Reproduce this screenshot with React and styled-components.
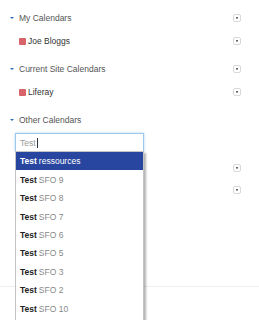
import React from "react";
import styled, { createGlobalStyle } from "styled-components";

const GlobalStyle = createGlobalStyle`
  html, body {
    margin: 0;
    padding: 0;
    background: #fff;
  }
  body {
    font-family: "Liberation Sans", Arial, sans-serif;
    font-size: 8.5px;
    width: 259px;
    height: 320px;
    overflow: hidden;
  }
`;

const Page = styled.div`
  padding: 9px 17px 0 10px;
`;

const Section = styled.div`
  margin-bottom: 10px;
`;

const HeaderRow = styled.div`
  display: flex;
  align-items: center;
  height: 18px;
  margin-bottom: 5px;
`;

const Caret = styled.span`
  width: 0;
  height: 0;
  border-left: 2px solid transparent;
  border-right: 2px solid transparent;
  border-top: 2.5px solid #2f6db5;
  margin-right: 5px;
`;

const Title = styled.span`
  flex: 1;
  color: #555;
`;

const MenuButton = styled.span`
  width: 6px;
  height: 6px;
  border: 1px solid #d8d8d8;
  border-radius: 2px;
  display: flex;
  align-items: center;
  justify-content: center;
  box-sizing: content-box;
  margin-right: 1px;
  &::after {
    content: "";
    width: 0;
    height: 0;
    margin-top: 1px;
    border-left: 1.5px solid transparent;
    border-right: 1.5px solid transparent;
    border-top: 1.5px solid #444;
    box-shadow: 0 -1px 0 #666;
  }
`;

const List = styled.div`
  display: flex;
  flex-direction: column;
  gap: ${(p) => p.$gap || 0}px;
  margin-top: ${(p) => p.$top || 0}px;
`;

const ItemRow = styled.div`
  display: flex;
  align-items: center;
  height: 18px;
  padding-left: 9px;
`;

const Swatch = styled.span`
  width: 7px;
  height: 7px;
  border-radius: 1px;
  background: ${(p) => p.$color};
  margin-right: 2px;
`;

const ItemName = styled.span`
  flex: 1;
  color: #333;
`;

const SearchWrap = styled.div`
  position: relative;
  margin: -1px 0 0 5px;
  width: 129px;
`;

const SearchBox = styled.div`
  box-sizing: border-box;
  height: 19px;
  border: 1px solid #9cc8ee;
  box-shadow: 0 0 2px rgba(102, 175, 233, 0.6);
  display: flex;
  align-items: center;
  padding-left: 4px;
  color: #999;
  background: #fff;
`;

const TextCursor = styled.span`
  display: inline-block;
  width: 1px;
  height: 10px;
  background: #333;
  margin-left: 1px;
`;

const Dropdown = styled.div`
  position: absolute;
  top: 18px;
  left: 0;
  width: 129px;
  padding-bottom: 30px;
  box-sizing: border-box;
  background: #fff;
  border: 1px solid #c4c4c4;
  box-shadow: 2px 2px 2px rgba(0, 0, 0, 0.3);
  z-index: 10;
`;

const Option = styled.div`
  height: 18.45px;
  display: flex;
  align-items: center;
  padding-left: 4px;
  background: ${(p) => (p.$active ? "#2846a0" : "transparent")};
  color: ${(p) => (p.$active ? "#fff" : "#888")};
  b {
    color: ${(p) => (p.$active ? "#fff" : "#222")};
    margin-right: 2px;
  }
`;

const Divider = styled.div`
  height: 1px;
  background: #eee;
  margin: 0 -17px 0 -10px;
`;

const options = [
  "ressources",
  "SFO 9",
  "SFO 8",
  "SFO 7",
  "SFO 6",
  "SFO 5",
  "SFO 3",
  "SFO 2",
  "SFO 10",
];

export default function App() {
  return (
    <>
      <GlobalStyle />
      <Page>
        <Section>
          <HeaderRow>
            <Caret />
            <Title>My Calendars</Title>
            <MenuButton />
          </HeaderRow>
          <List>
            <ItemRow>
              <Swatch $color="#d9636b" />
              <ItemName>Joe Bloggs</ItemName>
              <MenuButton />
            </ItemRow>
          </List>
        </Section>

        <Section>
          <HeaderRow>
            <Caret />
            <Title>Current Site Calendars</Title>
            <MenuButton />
          </HeaderRow>
          <List>
            <ItemRow>
              <Swatch $color="#d9636b" />
              <ItemName>Liferay</ItemName>
              <MenuButton />
            </ItemRow>
          </List>
        </Section>

        <Section>
          <HeaderRow>
            <Caret />
            <Title>Other Calendars</Title>
          </HeaderRow>
          <SearchWrap>
            <SearchBox>
              Test
              <TextCursor />
            </SearchBox>
            <Dropdown>
              {options.map((o, i) => (
                <Option key={o} $active={i === 0}>
                  <b>Test</b>
                  {o}
                </Option>
              ))}
            </Dropdown>
          </SearchWrap>
          <List $top={7} $gap={4}>
            <ItemRow>
              <Swatch $color="#5b8fd6" />
              <ItemName />
              <MenuButton />
            </ItemRow>
            <ItemRow>
              <Swatch $color="#6fbf73" />
              <ItemName />
              <MenuButton />
            </ItemRow>
          </List>
        </Section>

        <List $top={87}>
          <Divider />
        </List>
      </Page>
    </>
  );
}
